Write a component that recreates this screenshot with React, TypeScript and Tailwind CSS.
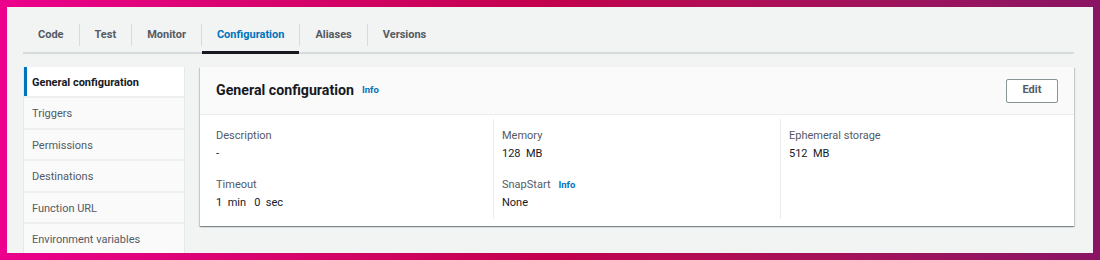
import React from "react";

const tabs = ["Code", "Test", "Monitor", "Configuration", "Aliases", "Versions"];

const sideItems = [
  "General configuration",
  "Triggers",
  "Permissions",
  "Destinations",
  "Function URL",
  "Environment variables",
];

function Info() {
  return <span className="ml-2 text-[9.5px] font-bold text-[#0073bb]">Info</span>;
}

function Field({ label, value, info }: { label: string; value: string; info?: boolean }) {
  return (
    <div className="mb-[13px] last:mb-0">
      <div className="flex items-center text-[11px] leading-[18px] text-[#545b64]">
        {label}
        {info && <Info />}
      </div>
      <div className="text-[11px] leading-[18px] text-[#16191f] whitespace-pre">{value}</div>
    </div>
  );
}

export default function App() {
  return (
    <div
      className="w-[1100px] h-[260px] p-[7px] bg-gradient-to-r from-[#ec008c] via-[#c2004c] to-[#8a1464]"
      style={{ fontFamily: "Roboto, 'Liberation Sans', sans-serif" }}
    >
      <div className="h-full overflow-hidden bg-[#f2f3f3] px-4 pt-[11px]">
        {/* Tabs */}
        <div className="flex mr-[3px] border-b-2 border-[#d5dbdb]">
          {tabs.map((t, i) => {
            const active = t === "Configuration";
            return (
              <div key={t} className="flex items-center">
                {i > 0 && <span className="h-[22px] w-px bg-[#d5dbdb]" />}
                <div
                  className={`relative flex h-[34px] items-center px-[15px] text-[11px] font-bold ${
                    active ? "text-[#0073bb]" : "text-[#545b64]"
                  }`}
                >
                  {t}
                  {active && <span className="absolute -bottom-[2px] left-0 right-0 h-[3px] bg-[#16191f]" />}
                </div>
              </div>
            );
          })}
        </div>

        <div className="mt-[13px] flex gap-[15px]">
          {/* Sidebar */}
          <div className="w-[162px] shrink-0 border-l border-r border-[#e4e8e8]">
            {sideItems.map((s, i) => {
              const active = i === 0;
              return (
                <div
                  key={s}
                  className={`flex h-[31.4px] items-center border-b-2 border-[#eef0f0] pl-2 pt-[3px] text-[11px] ${
                    active
                      ? "bg-white font-bold text-[#16191f] shadow-[inset_3px_0_0_#0073bb]"
                      : "bg-[#fafafa] text-[#545b64]"
                  }`}
                >
                  {s}
                </div>
              );
            })}
          </div>

          {/* Panel */}
          <div className="h-[159px] w-[874px] bg-white shadow-[0_1px_1px_0_rgba(0,28,36,0.3),1px_1px_1px_0_rgba(0,28,36,0.15),-1px_1px_1px_0_rgba(0,28,36,0.15)]">
            <div className="flex h-[48px] items-center justify-between border-b border-[#eaeded] bg-[#fafafa] px-4">
              <div className="flex items-center">
                <span className="text-[14.2px] font-bold text-[#16191f]">General configuration</span>
                <Info />
              </div>
              <button className="h-6 w-[52px] rounded-[2px] border border-[#879596] bg-white text-[11px] font-bold text-[#545b64]">
                Edit
              </button>
            </div>
            <div className="grid grid-cols-[277px_287px_1fr] px-4 pt-1">
              <div className="pt-[8px] pb-[7px]">
                <Field label="Description" value="-" />
                <Field label="Timeout" value="1  min   0  sec" />
              </div>
              <div className="border-l border-[#eaeded] pl-2 pt-[8px] pb-[7px]">
                <Field label="Memory" value="128  MB" />
                <Field label="SnapStart" value="None" info />
              </div>
              <div className="border-l border-[#eaeded] pl-2 pt-[8px] pb-[7px]">
                <Field label="Ephemeral storage" value="512  MB" />
              </div>
            </div>
          </div>
        </div>
      </div>
    </div>
  );
}
